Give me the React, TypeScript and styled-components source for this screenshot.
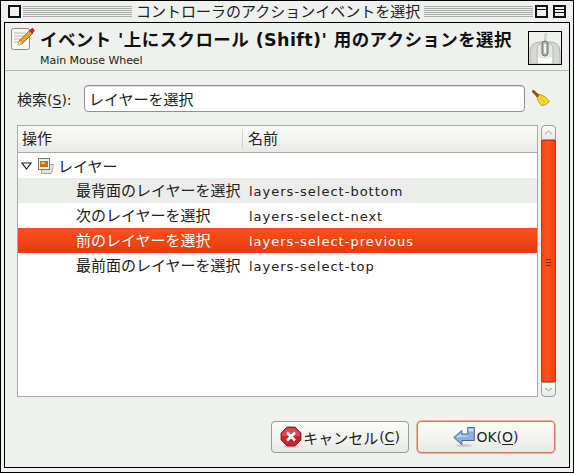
import React from "react";
import styled, { createGlobalStyle } from "styled-components";

const Global = createGlobalStyle`
  html, body { margin: 0; padding: 0; background: #eff1ee; }
  body { width: 574px; height: 473px; overflow: hidden; font-family: "DejaVu Sans", "Noto Sans CJK JP", sans-serif; font-size: 13px; color: #1a1a1a; }
  * { box-sizing: border-box; }
`;
const Outer = styled.div`
  width: 574px; height: 473px; border: 1px solid #000;
  padding: 0 3px 4px 3px; display: flex; flex-direction: column; background: #eff1ee;
`;
const TitleBar = styled.div`
  height: 21px; display: flex; align-items: center; padding: 0 4px 0 4px; flex: none;
`;
const WinBtn = styled.div<{ $gap?: number }>`
  width: 13px; height: 13px; border: 2px solid #111; background: #eff1ee; flex: none; position: relative;
  margin-left: ${p => p.$gap ?? 0}px;
`;
const MaxLine = styled.div<{ $top: number }>`
  position: absolute; left: 0; right: 0; top: ${p => p.$top}px; height: 1px; background: #111;
`;
const Grip = styled.div<{ $left?: number; $right?: number }>`
  flex: 1; height: 12px; margin: 0 ${p => p.$right ?? 0}px 0 ${p => p.$left ?? 0}px;
  background: repeating-linear-gradient(to bottom, #a9aca8 0 1px, #eff1ee 1px 2px);
`;
const TitleText = styled.div`
  font-size: 15px; line-height: 18px; padding: 0 4px; white-space: nowrap; color: #222;
`;
const Inner = styled.div`
  flex: 1; border: 1px solid #000; display: flex; flex-direction: column; min-height: 0;
`;
const Header = styled.div`
  height: 48px; flex: none; border-bottom: 1px solid #b4b8b2; display: flex; padding: 3px 7px 0 6px;
`;
const HeaderIcon = styled.svg`
  width: 24px; height: 24px; flex: none; margin-right: 5px; margin-top: 1px;
`;
const HeaderText = styled.div`
  flex: 1; min-width: 0; padding-top: 2px;
`;
const Title = styled.div`
  font-weight: 700; font-size: 17.5px; line-height: 24px; white-space: nowrap; letter-spacing: 0.4px; color: #111;
`;
const Sub = styled.div`
  font-size: 11px; line-height: 14px; margin-top: 2px; color: #222; letter-spacing: -0.05px;
`;
const MouseBox = styled.div`
  width: 34px; height: 34px; border: 1px solid #000; flex: none; margin-top: 5px; background: #eff1ee;
`;
const Body = styled.div`
  flex: 1; min-height: 0; padding: 14px 12px 12px 12px; display: flex; flex-direction: column;
`;
const SearchRow = styled.div`
  display: flex; align-items: center; height: 27px; flex: none;
`;
const SearchLabel = styled.label`
  width: 67px; flex: none; font-size: 15px; color: #222; white-space: nowrap;
`;
const Latin = styled.span`
  font-size: 14px;
`;
const Under = styled.span`
  text-decoration: underline; text-underline-offset: 2px;
`;
const Entry = styled.div`
  width: 441px; height: 27px; flex: none; border: 1px solid #8e918c; border-radius: 4px; background: #fff;
  padding: 0 4px; display: flex; align-items: center; font-size: 15px; color: #222;
  box-shadow: inset 0 1px 1px #ddd;
`;
const Broom = styled.svg`
  width: 18px; height: 18px; margin-left: 7px; flex: none;
`;
const ListRow = styled.div`
  display: flex; margin-top: 13px; height: 272px; flex: none; gap: 3px;
`;
const Tree = styled.div`
  width: 521px; border: 1px solid #a6aba4; background: #fff; display: flex; flex-direction: column; flex: none;
`;
const TreeHead = styled.div`
  height: 27px; flex: none; display: grid; grid-template-columns: 225px 1fr; align-items: center;
  background: linear-gradient(to bottom, #fafbf9, #f4f5f3 50%, #e7e9e6); border-bottom: 1px solid #a6aba4;
  font-size: 15px; color: #222;
`;
const HeadCell = styled.div<{ $first?: boolean }>`
  padding-left: ${p => (p.$first ? 4 : 5)}px; height: 20px; line-height: 20px;
  ${p => (p.$first ? "border-right: 1px solid #d0d3ce;" : "")}
`;
const TreeRow = styled.div<{ $alt?: boolean; $sel?: boolean }>`
  height: 25px; display: grid; grid-template-columns: 232px 1fr; align-items: center; flex: none;
  background: ${p => (p.$sel ? "linear-gradient(to bottom, #ff4f1a, #e43c0e)" : p.$alt ? "#ebedea" : "#fff")};
  color: ${p => (p.$sel ? "#fff" : "#222")};
`;
const ActionCell = styled.div`
  padding-left: 58px; font-size: 15px; line-height: 20px; white-space: nowrap;
`;
const NameCell = styled.div`
  font-size: 13px; line-height: 20px; padding-top: 2px; margin-left: -1px; white-space: nowrap; letter-spacing: 1px;
`;
const GroupRow = styled.div`
  height: 25px; display: flex; align-items: center; padding-left: 3px; flex: none; font-size: 15px; color: #222;
`;
const Arrow = styled.svg`
  width: 11px; height: 8px; flex: none; margin-right: 6px;
`;
const GroupIcon = styled.svg`
  width: 16px; height: 18px; flex: none; margin-right: 4px;
`;
const Scroll = styled.div`
  width: 15px; display: flex; flex-direction: column; flex: none;
`;
const ScrollBtn = styled.div<{ $top?: boolean }>`
  height: 15px; flex: none; border: 1px solid #9a9e98; background: linear-gradient(to bottom, #fafbf9, #e9ebe8);
  border-radius: ${p => (p.$top ? "4px 4px 0 0" : "0 0 4px 4px")};
  display: flex; align-items: center; justify-content: center;
`;
const Thumb = styled.div`
  flex: 1; background: linear-gradient(to right, #f24514, #ff5220 40%, #ee4010);
  border: 1px solid #c9390f; position: relative;
`;
const ThumbGrip = styled.div`
  width: 5px; height: 7px; position: absolute; top: 118px; left: 4px;
  background: repeating-linear-gradient(to bottom, #8a2a0a 0 1px, transparent 1px 3px);
`;
const Buttons = styled.div`
  display: flex; justify-content: flex-end; gap: 8px; margin-top: 24px; padding-right: 2px;
`;
const Btn = styled.div<{ $def?: boolean }>`
  width: 138px; height: 32px; border-radius: 4px;
  border: 1px solid ${p => (p.$def ? "#e0745a" : "#9a9e98")};
  ${p => (p.$def ? "box-shadow: 0 0 0 0.5px #e0745a;" : "")}
  background: linear-gradient(to bottom, #fbfcfa, #f3f4f2 55%, #e6e8e5);
  display: flex; align-items: center; justify-content: center; font-size: 15px; color: #222; gap: 1px;
`;
const BtnIcon = styled.svg`
  width: 22px; height: 22px; flex: none;
`;

const Pencil = () => (
  <HeaderIcon viewBox="0 0 24 24">
    <rect x="0.5" y="1.5" width="18" height="21" rx="2" fill="#f6f6f4" stroke="#8c8c88" />
    <path d="M3 6h12M3 9h12M3 12h9M3 15h6" stroke="#b8b8b4" />
    <path d="M7 18l1-4L19 3l3 3L11 17z" fill="#f0a030" stroke="#a85c10" strokeWidth="0.8" />
    <path d="M18.5 3.5l3-2.5 2 2.5-2.5 3z" fill="#d82020" stroke="#901010" strokeWidth="0.5" />
    <path d="M7 18l1-4 3 3z" fill="#f3d9b0" />
  </HeaderIcon>
);
const MouseIcon = () => (
  <svg viewBox="0 0 32 32" width="32" height="32" style={{ display: "block" }}>
    <path d="M1 32V20Q1 10 11 10h10q10 0 10 10v12z" fill="#d6d8d5" stroke="#aeb0ac" />
    <path d="M8 32V16q0-5 8-5t8 5v16z" fill="#e6e7e5" stroke="#b8bab6" />
    <path d="M9 31v-6q7 3 14 0v6z" fill="#fff" />
    <path d="M17 1l-1 8" stroke="#cfd1cd" strokeWidth="2.500" />
    <rect x="13" y="9" width="6" height="15" rx="3" fill="#b4b6b2" stroke="#6e6e6c" />
    <rect x="15" y="12" width="2" height="9" fill="#f2f2f2" />
  </svg>
);
const BroomIcon = () => (
  <Broom viewBox="0 0 18 18">
    <path d="M1.500 1.500l3.500 3.500" stroke="#8a5218" strokeWidth="3" strokeLinecap="round" />
    <path d="M3.500 6l3-2.500 1.500 1.500-2.500 3z" fill="#c8401c" />
    <path d="M5 8l3-3.500q6 1.500 9.500 7-4 4.500-8 4-3-3-4.500-7.500z" fill="#f4dc28" stroke="#a89010" strokeWidth="0.8" />
    <path d="M8 7l5 6" stroke="#d8b818" />
  </Broom>
);
const LayerIcon = () => (
  <GroupIcon viewBox="0 0 16 18">
    <path d="M3.500 7.500h12l-2 9h-10z" fill="#e6e6e2" stroke="#a8a8a4" />
    <rect x="0.500" y="1.500" width="11" height="11" fill="#eee" stroke="#7a7a76" />
    <rect x="2" y="4" width="8" height="6" fill="#b87818" />
    <rect x="3" y="5" width="4" height="2" fill="#f0c040" />
  </GroupIcon>
);
const CancelIcon = () => (
  <BtnIcon viewBox="0 0 22 22">
    <ellipse cx="11" cy="20.500" rx="8" ry="1.300" fill="#c8cac6" />
    <path d="M7 1h8l6 6v7l-6 6H7l-6-6V7z" fill="#c8242a" stroke="#7c1014" strokeWidth="0.8" />
    <path d="M7 2h8l5 5v3H2V7z" fill="#e06068" opacity="0.6" />
    <path d="M7 6.500l8 8M15 6.500l-8 8" stroke="#fff" strokeWidth="2.600" />
  </BtnIcon>
);
const OkIcon = () => (
  <BtnIcon viewBox="0 0 22 22">
    <ellipse cx="11" cy="19.500" rx="8" ry="1.500" fill="#c8cac6" />
    <path d="M0.800 11.500l8-7v3.500h6V1.500h6.500v13H8.800v4z" fill="#8cb0d8" stroke="#3f6a9c" strokeWidth="1" />
    <path d="M15.500 2.500h5v3h-5zM3 11.500l5-4v2h7v1z" fill="#c4d8ee" />
  </BtnIcon>
);

const rows = [
  ["最背面のレイヤーを選択", "layers-select-bottom"],
  ["次のレイヤーを選択", "layers-select-next"],
  ["前のレイヤーを選択", "layers-select-previous"],
  ["最前面のレイヤーを選択", "layers-select-top"],
];

export default function App() {
  return (
    <>
      <Global />
      <Outer>
        <TitleBar>
          <WinBtn />
          <Grip $left={2} />
          <TitleText>コントローラのアクションイベントを選択</TitleText>
          <Grip $right={2} />
          <WinBtn><MaxLine $top={2} /></WinBtn>
          <WinBtn $gap={5}><MaxLine $top={2} /><MaxLine $top={5} /></WinBtn>
        </TitleBar>
        <Inner>
          <Header>
            <Pencil />
            <HeaderText>
              <Title>イベント '上にスクロール (Shift)' 用のアクションを選択</Title>
              <Sub>Main Mouse Wheel</Sub>
            </HeaderText>
            <MouseBox><MouseIcon /></MouseBox>
          </Header>
          <Body>
            <SearchRow>
              <SearchLabel>検索<Latin>(<Under>S</Under>):</Latin></SearchLabel>
              <Entry>レイヤーを選択</Entry>
              <BroomIcon />
            </SearchRow>
            <ListRow>
              <Tree>
                <TreeHead>
                  <HeadCell $first>操作</HeadCell>
                  <HeadCell>名前</HeadCell>
                </TreeHead>
                <GroupRow>
                  <Arrow viewBox="0 0 11 8"><path d="M1 1h9L5.500 7z" fill="none" stroke="#222" strokeWidth="1.200" /></Arrow>
                  <LayerIcon />
                  レイヤー
                </GroupRow>
                {rows.map(([a, n], i) => (
                  <TreeRow key={n} $alt={i === 0} $sel={i === 2}>
                    <ActionCell>{a}</ActionCell>
                    <NameCell>{n}</NameCell>
                  </TreeRow>
                ))}
              </Tree>
              <Scroll>
                <ScrollBtn $top>
                  <svg width="9" height="5" viewBox="0 0 9 5"><path d="M1 4l3.500-3L8 4" fill="none" stroke="#9a9e98" /></svg>
                </ScrollBtn>
                <Thumb><ThumbGrip /></Thumb>
                <ScrollBtn>
                  <svg width="9" height="5" viewBox="0 0 9 5"><path d="M1 1l3.500 3L8 1" fill="none" stroke="#9a9e98" /></svg>
                </ScrollBtn>
              </Scroll>
            </ListRow>
            <Buttons>
              <Btn><CancelIcon />キャンセル<Latin>(<Under>C</Under>)</Latin></Btn>
              <Btn $def><OkIcon /><Latin>OK(<Under>O</Under>)</Latin></Btn>
            </Buttons>
          </Body>
        </Inner>
      </Outer>
    </>
  );
}
